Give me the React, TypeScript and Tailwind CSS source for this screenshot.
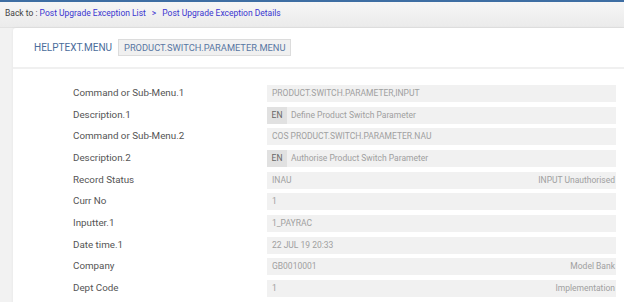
const rows: { label: string; value: string; lang?: boolean; right?: string }[] = [
  { label: "Command or Sub-Menu.1", value: "PRODUCT.SWITCH.PARAMETER,INPUT" },
  { label: "Description.1", value: "Define Product Switch Parameter", lang: true },
  { label: "Command or Sub-Menu.2", value: "COS PRODUCT.SWITCH.PARAMETER.NAU" },
  { label: "Description.2", value: "Authorise Product Switch Parameter", lang: true },
  { label: "Record Status", value: "INAU", right: "INPUT Unauthorised" },
  { label: "Curr No", value: "1" },
  { label: "Inputter.1", value: "1_PAYRAC" },
  { label: "Date time.1", value: "22 JUL 19 20:33" },
  { label: "Company", value: "GB0010001", right: "Model Bank" },
  { label: "Dept Code", value: "1", right: "Implementation" },
];

export default function App() {
  return (
    <div className="h-[302px] w-[624px] overflow-hidden bg-[#f2f2f2] font-['Roboto',sans-serif]">
      <div className="h-[28px] border-t-2 border-[#3e6ea3] bg-gradient-to-b from-[#f6f6f6] to-[#ebebeb] border-b border-b-[#e2e2e2] pl-[5px] pt-[5px] text-[8.5px] leading-[12px]">
        <span className="text-[#444]">Back to : </span>
        <span className="text-[#3b36d0]">Post Upgrade Exception List</span>
        <span className="px-[6px] text-[#3b36d0]">&gt;</span>
        <span className="text-[#3b36d0]">Post Upgrade Exception Details</span>
      </div>

      <div className="ml-[13px] h-full rounded-tl-[3px] bg-white shadow-[0_0_3px_rgba(0,0,0,0.06)]">
        <div className="flex h-[41px] items-center gap-[6px] border-b-2 border-[#f0f0f0] pl-[21px]">
          <span className="text-[10px] text-[#4a6c9b]">HELPTEXT.MENU</span>
          <span className="flex h-[17px] items-center border border-[#dcdcdc] bg-[#f0f0f0] px-[5px] text-[9.3px] text-[#5877a3]">
            PRODUCT.SWITCH.PARAMETER.MENU
          </span>
        </div>

        <div className="flex flex-col gap-[4.67px] pl-[60px] pr-[8px] pt-[16px]">
          {rows.map((r) => (
            <div key={r.label} className="flex h-[17px] items-center">
              <div className="w-[194px] text-[9.8px] text-[#555]">{r.label}</div>
              <div className="flex h-[17px] flex-1 items-center bg-[#f1f1f1] text-[8.5px] text-[#a0a0a0]">
                {r.lang ? (
                  <span className="flex h-full w-[20px] items-center justify-center bg-[#e1e1e1] text-[#666]">EN</span>
                ) : null}
                <span className={r.lang ? "pl-[4px]" : "pl-[5px]"}>{r.value}</span>
                {r.right ? <span className="ml-auto pr-[1px]">{r.right}</span> : null}
              </div>
            </div>
          ))}
        </div>
      </div>
    </div>
  );
}
